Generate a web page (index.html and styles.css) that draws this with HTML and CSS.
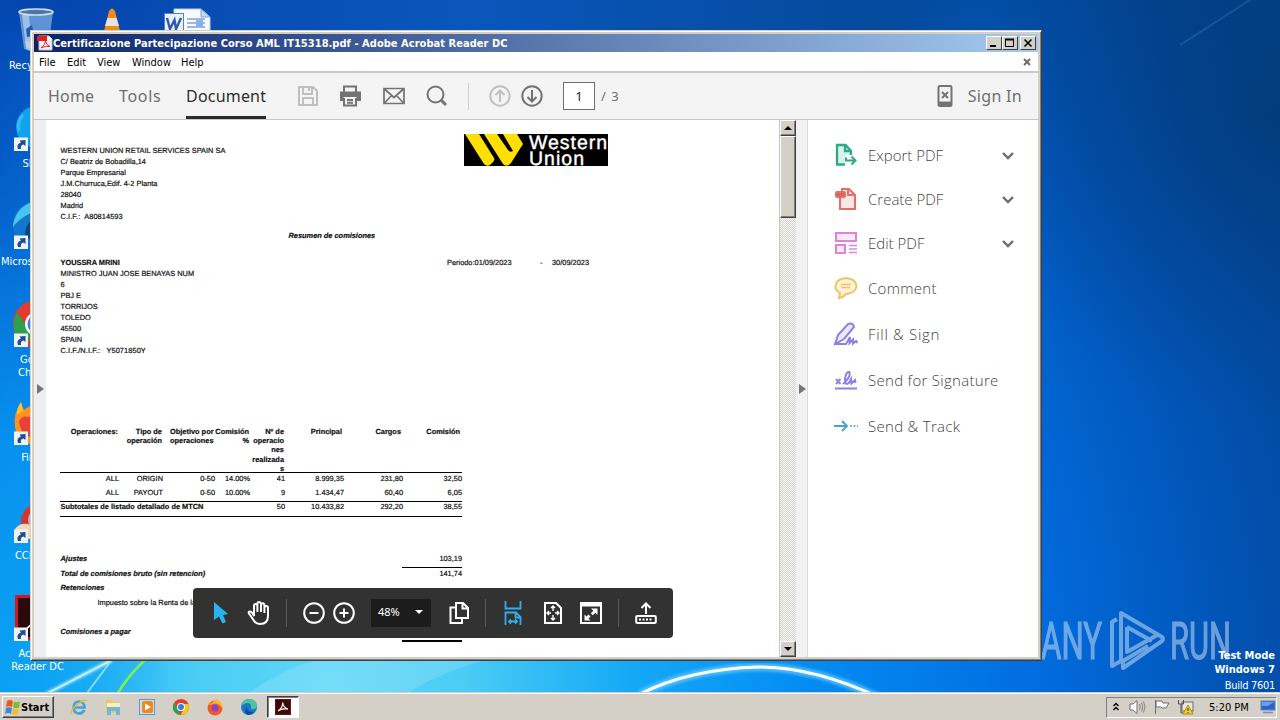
FILE: index.html
```html
<!DOCTYPE html>
<html lang="en">
<head>
    <meta charset="UTF-8">
    <meta name="viewport" content="width=device-width, initial-scale=1.0">
    <title>Certificazione Partecipazione Corso AML IT15318.pdf - Adobe Acrobat Reader DC</title>
    <link rel="stylesheet" href="styles.css">
</head>
<body>
<div class="desktop">

    <!-- Wallpaper -->
    <svg class="wallpaper" viewBox="0 0 1280 720">
        <defs>
            <radialGradient id="glow" gradientUnits="userSpaceOnUse" cx="330" cy="690" r="1130">
                <stop offset="0" stop-color="#5fd8f6"/>
                <stop offset=".12" stop-color="#4accf5"/>
                <stop offset=".27" stop-color="#14a8f5"/>
                <stop offset=".42" stop-color="#048cf4"/>
                <stop offset=".62" stop-color="#016de0"/>
                <stop offset=".8" stop-color="#0253b4"/>
                <stop offset="1" stop-color="#033f86"/>
            </radialGradient>
            <linearGradient id="leftShade" x1="0" y1="0" x2="0" y2="1">
                <stop offset="0" stop-color="#0546b0"/>
                <stop offset=".28" stop-color="#0462cc"/>
                <stop offset=".6" stop-color="#078fee"/>
                <stop offset="1" stop-color="#0ba4f4"/>
            </linearGradient>
            <linearGradient id="leftFade" x1="0" y1="0" x2="1" y2="0">
                <stop offset="0" stop-color="#fff"/>
                <stop offset=".25" stop-color="#fff" stop-opacity=".8"/>
                <stop offset="1" stop-color="#fff" stop-opacity="0"/>
            </linearGradient>
            <linearGradient id="topShade" x1="0" y1="0" x2="1" y2="0">
                <stop offset="0" stop-color="#0545ae"/>
                <stop offset=".45" stop-color="#0a56bb"/>
                <stop offset=".85" stop-color="#044a9d"/>
                <stop offset="1" stop-color="#044a9d" stop-opacity="0"/>
            </linearGradient>
            <radialGradient id="corner" gradientUnits="userSpaceOnUse" cx="1270" cy="120" r="300">
                <stop offset="0" stop-color="#033a78" stop-opacity=".7"/>
                <stop offset="1" stop-color="#033f86" stop-opacity="0"/>
            </radialGradient>
            <mask id="leftMask"><rect width="170" height="720" fill="url(#leftFade)"/></mask>
            <filter id="soft"><feGaussianBlur stdDeviation="1.6"/></filter>
        </defs>
        <rect width="1280" height="720" fill="url(#glow)"/>
        <rect width="1040" height="32" fill="url(#topShade)"/>
        <rect x="960" width="320" height="440" fill="url(#corner)"/>
        <rect width="170" height="720" fill="url(#leftShade)" mask="url(#leftMask)"/>
        <path d="M240 700Q300 650 420 640H560Q430 670 400 700Z" fill="#fff" opacity=".14"/>
        <path d="M46 694L112 660" stroke="#c8f4ff" stroke-width="3" filter="url(#soft)"/>
        <path d="M46 694L110 661" stroke="#d8f8ff" stroke-width="1.5" opacity=".8"/>
        <path d="M87 693L111 661" stroke="#9feaf8" stroke-width="2" opacity=".8"/>
        <path d="M118 693Q128 676 145 660" stroke="#7ef04e" stroke-width="2.5" fill="none"/>
        <path d="M640 694Q690 669 758 667Q815 667 880 698" stroke="#6cd0ff" stroke-width="8" fill="none" filter="url(#soft)" opacity=".7"/>
        <path d="M640 694Q690 669 758 667Q815 667 880 698" stroke="#fff" stroke-width="3" fill="none"/>
        <path d="M1180 45L1250 0" stroke="#4a86c0" stroke-width="2" opacity=".3"/>
    </svg>

    <!-- Desktop icons -->
    <div class="icons">
        <div class="icon">
            <svg width="48" height="48" viewBox="0 0 48 48">
                <path d="M6 7L11 44Q23 49 35 44L40 7Z" fill="#7fa9dc" opacity=".75"/>
                <path d="M9 10L13 42L19 44L16 10Z" fill="#d6e6f6" opacity=".55"/>
                <ellipse cx="23" cy="7" rx="17" ry="3" fill="#4c77ae" stroke="#d9dee2" stroke-width="1.6"/>
                <path d="M12 36Q23 40 35 35L34 44Q23 49 13 44Z" fill="#cdd5dc" opacity=".7"/>
                <path d="M13 24L19 20L21 31L14 32Z" fill="#1b5cc4"/>
            </svg>
            <span>Recycle Bin</span>
        </div>
        <div class="icon">
            <svg width="48" height="48" viewBox="0 0 48 48">
                <circle cx="24" cy="24" r="21" fill="#11a2ee"/>
                <path d="M10 12Q4 18 6 28" stroke="#37bbf6" stroke-width="3" fill="none"/>
                <use href="#shortcut"/>
            </svg>
            <span>Skype</span>
        </div>
        <div class="icon">
            <svg width="48" height="48" viewBox="0 0 48 48">
                <circle cx="24" cy="24" r="24" fill="#1177cc"/>
                <path d="M0 24Q4 2 26 0L40 8Q14 8 0 26Z" fill="#49c4ef"/>
                <path d="M12 34Q12 20 24 18V44Z" fill="#0a4584"/>
                <use href="#shortcut"/>
            </svg>
            <span>Microsoft Edge</span>
        </div>
        <div class="icon">
            <svg width="48" height="48" viewBox="0 0 48 48">
                <circle cx="24" cy="25" r="24" fill="#e33b2e"/>
                <path d="M4 13L18 34L14 48Q-6 34 4 13Z" fill="#2da14d"/>
                <circle cx="24" cy="25" r="12" fill="#fff"/>
                <circle cx="24" cy="25" r="9.500" fill="#3f79e6"/>
                <use href="#shortcut"/>
            </svg>
            <span>Google Chrome</span>
        </div>
        <div class="icon">
            <svg width="48" height="48" viewBox="0 0 48 48">
                <path d="M2 30Q0 16 8 6L11 13Q15 9 22 8V48Q4 46 2 30Z" fill="#ff9022"/>
                <path d="M6 24Q9 18 16 20L24 17V40Q8 42 6 24Z" fill="#e8433a"/>
                <path d="M4 18Q4 10 8 5L10 14Z" fill="#ffc529"/>
                <use href="#shortcut"/>
            </svg>
            <span>Firefox</span>
        </div>
        <div class="icon">
            <svg width="48" height="48" viewBox="0 0 48 48">
                <circle cx="27" cy="27" r="19" fill="#d3362b"/>
                <circle cx="26" cy="25" r="11" fill="#a3b7d8"/>
                <path d="M2 34Q8 26 18 30L22 44H6Z" fill="#f1d9b5"/>
                <use href="#shortcut"/>
            </svg>
            <span>CCleaner</span>
        </div>
        <div class="icon">
            <svg width="48" height="48" viewBox="0 0 48 48">
                <rect x="3.500" y="3.500" width="42" height="42" fill="#2a0a0a" stroke="#d8141c" stroke-width="3"/>
                <path d="M12 37Q22 30 26 16" stroke="#fff" stroke-width="1.500" fill="none"/>
                <use href="#shortcut"/>
            </svg>
            <span>Acrobat<br>Reader DC</span>
        </div>
        <div class="icon">
            <svg width="48" height="48" viewBox="0 0 48 48">
                <path d="M21 6Q24 1 27 6L35 38H13Z" fill="#f28a1a"/>
                <path d="M19.500 13H28.500L31 21H17Z" fill="#e6e4e2"/>
                <path d="M15 30H33L35 36H13Z" fill="#e6e4e2"/>
            </svg>
        </div>
        <div class="icon third">
            <svg width="48" height="48" viewBox="0 0 48 48">
                <path d="M11 4H38L47 12V48H11Z" fill="#f6fafe" stroke="#b9cfe8"/>
                <path d="M38 4V12H47Z" fill="#c2d8f0" stroke="#7ea4d2"/>
                <path d="M24 14H42M24 18H42M24 22H42" stroke="#7fa5d6" stroke-width="1.500"/>
                <rect x="33" y="15" width="7" height="7" fill="#86b0e6"/>
                <rect x="1.500" y="8.500" width="19" height="19" fill="#e9f0fa" stroke="#5d80bd"/>
                <path d="M4 13L7 24L11.500 15L13 24L18 13" stroke="#2f58aa" stroke-width="2.400" fill="none"/>
            </svg>
        </div>
    </div>

    <!-- Watermark -->
    <svg class="watermark" width="200" height="70" viewBox="0 0 200 70">
        <text x="1" y="55" textLength="61" lengthAdjust="spacingAndGlyphs">ANY</text>
        <text x="130" y="55" textLength="61" lengthAdjust="spacingAndGlyphs">RUN</text>
        <path d="M77 15L72 18V62L81 57V9L122 33Q124 35 122 37L83 64V57L108 42M87 23L112 37M87 23V48L119 30"/>
    </svg>
    <div class="build">
        <b>Test Mode</b>
        <b>Windows 7</b>
        <span>Build 7601</span>
    </div>

    <!-- Acrobat window -->
    <div class="window">
        <div class="titlebar">
            <svg width="16" height="16" viewBox="0 0 16 16">
                <path d="M2 1H12L15 4V15H2Z" fill="#f4f1f0" stroke="#c9c4c4"/>
                <rect x="0" y="1" width="10" height="5" fill="#e0221c"/>
                <path d="M4 13Q8 10 8.500 6Q9 10 13 11.500Q8 10.500 4 13" stroke="#d5322c" fill="none"/>
            </svg>
            <span class="title">Certificazione Partecipazione Corso AML IT15318.pdf - Adobe Acrobat Reader DC</span>
            <div class="winbtns">
                <i><svg width="12" height="10"><path d="M2 8H8" stroke="#000" stroke-width="2"/></svg></i>
                <i><svg width="12" height="10"><path d="M1.500 1.500H9.500V8.500H1.500Z" stroke="#000" fill="none"/><path d="M1 1.500H10" stroke="#000" stroke-width="2"/></svg></i>
                <i class="close"><svg width="12" height="10"><path d="M2.500 1.500L9.500 8.500M9.500 1.500L2.500 8.500" stroke="#000" stroke-width="1.600"/></svg></i>
            </div>
        </div>
        <div class="menubar">
            <span class="m-file">File</span>
            <span class="m-edit">Edit</span>
            <span class="m-view">View</span>
            <span class="m-window">Window</span>
            <span class="m-help">Help</span>
            <svg width="8" height="8"><path d="M1 1L7 7M7 1L1 7" stroke="#6b6b6b" stroke-width="2"/></svg>
        </div>

        <div class="toolbar">
            <div class="tabs">
                <span class="tab home">Home</span>
                <span class="tab tools">Tools</span>
                <span class="tab active">Document</span>
            </div>
            <div class="tb-icons">
                <svg class="dim" width="22" height="22" viewBox="0 0 22 22"><path d="M2 2H16L20 6V20H2ZM6 2V9H15V2M12 3V6M6 20V13H16V20"/></svg>
                <svg width="22" height="22" viewBox="0 0 22 22"><path d="M4 7V1.500H16V7M4 13V20.500H16V13M7 15H13M7 17.700H13"/><path d="M0 6.500H21V16H16.500V12H3.500V16H0Z" fill="#737373" stroke="none"/></svg>
                <svg width="22" height="22" viewBox="0 0 22 22"><path d="M1 3.500H21V18.500H1ZM1 3.500L11 12.500L21 3.500M1 18.500L8.500 10.500M21 18.500L13.500 10.500" stroke-width="1.700"/></svg>
                <svg width="22" height="22" viewBox="0 0 22 22"><circle cx="9.500" cy="9.500" r="8"/><path d="M15 15L20 20" stroke-width="3"/></svg>
            </div>
            <div class="pager">
                <svg class="dim" width="22" height="22" viewBox="0 0 22 22"><circle cx="11" cy="11" r="9.700"/><path d="M11 17V6M6.500 10L11 5.500L15.500 10"/></svg>
                <svg width="22" height="22" viewBox="0 0 22 22"><circle cx="11" cy="11" r="9.700"/><path d="M11 5V16M6.500 12L11 16.500L15.500 12"/></svg>
                <span class="page-no">1</span>
                <span class="page-count">/ 3</span>
            </div>
            <div class="signin">
                <svg width="16" height="22" viewBox="0 0 16 22"><rect x="1.500" y="1" width="13" height="20" rx="1.500"/><path d="M1 18.500H15" stroke-width="4"/><path d="M5 7L11 13M11 7L5 13"/></svg>
                <span>Sign In</span>
            </div>
        </div>

        <div class="content">
            <div class="side left"><svg width="7" height="10"><path d="M0 0L7 5L0 10Z" fill="#757575"/></svg></div>

            <div class="page">
                <svg class="logo" width="144" height="32" viewBox="0 0 144 32">
                    <rect width="144" height="32" fill="#000"/>
                    <path d="M1 0H15L30 24Q31 26 29 28L26 31Q23 33 20 30Z" fill="#ffe000"/>
                    <path d="M20 0H33L44 16Q46 19 49 17L39 0H53L59 10L47 29Q43 34 39 30Z" fill="#ffe000"/>
                    <text x="65" y="14.500" textLength="78">Western</text>
                    <text x="65" y="30.500" textLength="55">Union</text>
                </svg>

                <div class="company">
                    <p>WESTERN UNION RETAIL SERVICES SPAIN SA</p>
                    <p>C/ Beatriz de Bobadilla,14</p>
                    <p>Parque Empresarial</p>
                    <p>J.M.Churruca,Edif. 4-2 Planta</p>
                    <p>28040</p>
                    <p>Madrid</p>
                    <p class="cif">C.I.F.:&nbsp; A80814593</p>
                </div>

                <p class="summary">Resumen de comisiones</p>

                <div class="customer">
                    <div>
                        <p><b>YOUSSRA MRINI</b></p>
                        <p>MINISTRO JUAN JOSE BENAYAS NUM</p>
                        <p>6</p>
                        <p>PBJ E</p>
                        <p>TORRIJOS</p>
                        <p>TOLEDO</p>
                        <p>45500</p>
                        <p>SPAIN</p>
                        <p class="cif">C.I.F./N.I.F.: &nbsp; Y5071850Y</p>
                    </div>
                    <div class="period"><span>Periodo:01/09/2023</span><span>-</span><span>30/09/2023</span></div>
                </div>

                <div class="row head">
                    <span>Operaciones:</span>
                    <span>Tipo de<br>operación</span>
                    <span class="goal">Objetivo por<br>operaciones</span>
                    <span>Comisión<br>%</span>
                    <span>Nº de<br>operacio<br>nes<br>realizada<br>s</span>
                    <span>Principal</span>
                    <span>Cargos</span>
                    <span>Comisión</span>
                </div>
                <div class="row first"><span>ALL</span><span>ORIGIN</span><span>0-50</span><span>14.00%</span><span>41</span><span>8.999,35</span><span>231,80</span><span>32,50</span></div>
                <div class="row"><span>ALL</span><span>PAYOUT</span><span>0-50</span><span>10.00%</span><span>9</span><span>1.434,47</span><span>60,40</span><span>6,05</span></div>
                <div class="row subtotal"><b>Subtotales de listado detallado de MTCN</b><span>50</span><span>10.433,82</span><span>292,20</span><span>38,55</span></div>

                <div class="totals">
                    <div class="total"><em>Ajustes</em><span>103,19</span></div>
                    <div class="total sum"><em>Total de comisiones bruto (sin retencion)</em><span>141,74</span></div>
                    <div class="total"><em>Retenciones</em></div>
                    <p class="tax">Impuesto sobre la Renta de las</p>
                    <div class="total pay"><em>Comisiones a pagar</em></div>
                    <div class="rule"></div>
                </div>
            </div>

            <div class="scrollbar">
                <i class="sb-btn"><svg width="8" height="4"><path d="M0 4L4 0L8 4Z"/></svg></i>
                <i class="thumb"></i>
                <i class="sb-btn down"><svg width="8" height="4"><path d="M0 0L4 4L8 0Z"/></svg></i>
            </div>
            <div class="side right"><svg width="7" height="10"><path d="M0 0L7 5L0 10Z" fill="#757575"/></svg></div>

            <div class="panel">
                <div class="tool">
                    <svg width="24" height="24" viewBox="0 0 24 24" stroke="#2fa888"><path d="M13 21H3V2H11L17 8V12H11V19Z" fill="#d5f3ec" stroke="none"/><path d="M11 21.500H3V2H11.500L17 8V12M11 2V8H17" stroke-width="2.300"/><path d="M12 14.500V17.500H21M17.500 13.500L21.500 17.500L17.500 21.500"/></svg>
                    <span>Export PDF</span>
                    <svg class="chev" width="14" height="10"><path d="M2 2L7 7L12 2"/></svg>
                </div>
                <div class="tool">
                    <svg width="24" height="24" viewBox="0 0 24 24" stroke="#e0706b"><path d="M6 11V22H21V8L15 2H8V5M14 2V8H21" fill="#fde6e4"/><rect x="2" y="5" width="9" height="5" rx="1" fill="#e0605e"/></svg>
                    <span>Create PDF</span>
                    <svg class="chev" width="14" height="10"><path d="M2 2L7 7L12 2"/></svg>
                </div>
                <div class="tool">
                    <svg width="24" height="24" viewBox="0 0 24 24" stroke="#dc85d8"><path d="M2 2H22V10H2ZM2 14H11V22H2Z" fill="#fbe8fa"/><path d="M15 14.500H23M15 18H23M15 21.500H23" stroke-width="1.300"/></svg>
                    <span>Edit PDF</span>
                    <svg class="chev" width="14" height="10"><path d="M2 2L7 7L12 2"/></svg>
                </div>
                <div class="tool tall">
                    <svg width="24" height="24" viewBox="0 0 24 24" stroke="#ebc46a"><path d="M5 22L6 17Q1 14 1.500 10Q2 3 12 2Q22 3 22.500 10Q22 17 12 18Q9 21.500 5 22Z" fill="#fff3d2"/><path d="M7 8.500H17M7 11.500H16" stroke-width="1.300"/></svg>
                    <span>Comment</span>
                </div>
                <div class="tool tall sign">
                    <svg width="24" height="24" viewBox="0 0 24 24" stroke="#8b80e6"><path d="M1 22L4 13L14 2Q19 0 20 5L10 17L1 22Z" fill="#ebe9fd"/><path d="M1 22H12L16 15L15.500 21L19 17.500L19 21.500L22 19L23.500 21"/></svg>
                    <span>Fill &amp; Sign</span>
                </div>
                <div class="tool tall">
                    <svg width="24" height="24" viewBox="0 0 24 24" stroke="#8b80e6"><path d="M1 20.500H23M2 11L6.500 16M6.500 11L2 16M9 16Q17 9 15.500 4Q12 3 11 11Q11 18 15 15L17 11L17.500 15.500L21 12L21.500 15"/></svg>
                    <span>Send for Signature</span>
                </div>
                <div class="tool tall">
                    <svg width="24" height="24" viewBox="0 0 24 24" stroke="#4ba3c7"><path d="M0 12H13M8 7L13 12L8 17"/><path d="M16 12H24" stroke-dasharray="2 1.500" stroke-width="1.400"/></svg>
                    <span>Send &amp; Track</span>
                </div>
            </div>
        </div>

        <!-- Floating page controls -->
        <div class="hud">
            <svg class="h-arrow" width="16" height="22" viewBox="0 0 16 22"><path d="M1 0L15 12L10 13L13 20L9.500 21.500L6 14.500L1 18Z" fill="#26b4f5" stroke="none"/></svg>
            <svg class="h-hand" width="24" height="24" viewBox="0 0 24 24"><path d="M7 15V5Q7 3 8.700 3T10.400 5V11V3Q10.400 1 12 1T14 3V11V4Q14 2.200 15.600 2.200T17.400 4V12V7Q17.400 5 19.200 5T21 7V15Q21 23 13 23Q8.500 23 6.500 19L2 12.500Q1 10.500 3 10.500Q5 10.500 7 15Z"/></svg>
            <i class="sep s1"></i>
            <svg class="h-minus" width="22" height="22" viewBox="0 0 22 22"><circle cx="11" cy="11" r="9.800"/><path d="M6.500 11H15.500"/></svg>
            <svg class="h-plus" width="22" height="22" viewBox="0 0 22 22"><circle cx="11" cy="11" r="9.800"/><path d="M6.500 11H15.500M11 6.500V15.500"/></svg>
            <div class="zoom"><span>48%</span><svg width="8" height="4"><path d="M0 0H8L4 4Z" fill="#fff" stroke="none"/></svg></div>
            <svg class="h-copy" width="20" height="24" viewBox="0 0 20 24"><path d="M7 2H14L19 7V17H7ZM13.500 2V7.500H19M7 6.500H1.500V22H13V17"/></svg>
            <i class="sep s2"></i>
            <svg class="h-width" width="18" height="26" viewBox="0 0 18 26" stroke="#35aee8"><path d="M1.500 1V8.500H16.500V1M1.500 25V12.500H12L16.500 17V25M11.500 12.500V17.500H16.500M5 21.500H13M7 19.500L5 21.500L7 23.500M11 19.500L13 21.500L11 23.500" stroke-width="1.800"/></svg>
            <svg class="h-fit" width="18" height="22" viewBox="0 0 18 22"><path d="M1 1H12L17 6V21H1Z"/><path d="M9 4V9M9 13V18M3.500 11H7M11 11H14.500M7 6L9 4L11 6M7 16L9 18L11 16M5 9L3 11L5 13M13 9L15 11L13 13" stroke-width="1.400"/></svg>
            <svg class="h-full" width="22" height="22" viewBox="0 0 22 22"><path d="M1 1H21V21H1Z"/><path d="M1 2.500H21" stroke-width="4"/><path d="M11 6.500H17.500V13L15.300 10.800L12.800 13.300L10.800 11.300L13.300 8.700ZM4.500 12.500L6.500 14.500L8.500 12.500L10.500 14.500L8.500 16.500L10.500 18.500H4.500Z" fill="#fff" stroke="none"/></svg>
            <i class="sep s3"></i>
            <svg class="h-share" width="22" height="22" viewBox="0 0 22 22"><path d="M11 12V2M6.500 6L11 1.500L15.500 6"/><rect x="1.200" y="14" width="19.600" height="7" rx="1"/><path d="M4 17.500H18" stroke-width="2" stroke-dasharray="2 1.500"/></svg>
        </div>
    </div>

    <!-- Taskbar -->
    <div class="taskbar">
        <div class="start">
            <svg width="17" height="17" viewBox="0 0 17 17"><path d="M3 2Q6 0 9 2L8 8Q5 6.500 2 8Z" fill="#e8592a"/><path d="M10 2.500Q13 4 16 2.500L15 8.500Q12 10 9 8.500Z" fill="#7cb93c"/><path d="M2 9Q5 7.500 8 9L7 15Q4 13 1 15Z" fill="#3d87d8"/><path d="M9 9.500Q12 11 15 9.500L14 15Q11 17 8 15Z" fill="#f3bd2c"/></svg>
            <b>Start</b>
        </div>
        <div class="quick">
            <svg width="18" height="18" viewBox="0 0 18 18"><path d="M14.500 12Q12.500 15.500 9 15.500Q3.500 15 3.500 9.500Q4 3.500 9 3.500Q14.500 4 14.500 9.500H5" stroke="#43a4dc" stroke-width="2.600" fill="none"/><path d="M2 16Q-1 13 8 6Q16 0 17 3" stroke="#e7bd36" stroke-width="1.400" fill="none"/></svg>
            <svg width="18" height="18" viewBox="0 0 18 18"><path d="M2 2H8L9 4H16V15H2Z" fill="#e9c95f"/><path d="M3 5H16V9H3Z" fill="#fbf0bd"/><path d="M3 9H16V17H12V13H7V17H3Z" fill="#71b6dd"/></svg>
            <svg width="18" height="18" viewBox="0 0 18 18"><rect x="1.500" y="1.500" width="15" height="15" fill="#c9dff2" stroke="#5e97cb"/><rect x="4" y="3" width="11" height="12" rx="2" fill="#f08a16"/><path d="M7 5.500L13 9L7 12.500Z" fill="#fff"/></svg>
            <svg width="18" height="18" viewBox="0 0 18 18"><circle cx="9" cy="9" r="8" fill="#e2402f"/><path d="M2 5L8 12L7 17Q-2 13 2 5Z" fill="#31a350"/><path d="M16.500 6H9L12 11L8.500 17Q19 16 16.500 6Z" fill="#fbc61a"/><circle cx="9" cy="9" r="4" fill="#fff"/><circle cx="9" cy="9" r="3" fill="#3f78e3"/></svg>
            <svg width="18" height="18" viewBox="0 0 18 18"><circle cx="9" cy="10" r="7.500" fill="#f4572c"/><path d="M2 4L5 6Q10 1 11 1Q17 5 16.500 11Q12 4 7 6Q2 8 2 4Z" fill="#ffb822"/><circle cx="9" cy="10" r="3.500" fill="#7f46cf"/></svg>
            <svg width="18" height="18" viewBox="0 0 18 18"><circle cx="9" cy="9" r="8" fill="#1976c9"/><path d="M1 9Q2 1 10 1Q17 2 17 8Q16 12 11 11Q12 6 8 5Q3 5 1 9Z" fill="#49c7a0"/><path d="M7 9Q6 14 14 14Q11 17.500 7 16.500Q3 13 7 9Z" fill="#0d4e9c"/></svg>
        </div>
        <div class="task">
            <svg width="16" height="16" viewBox="0 0 16 16"><rect width="16" height="16" fill="#3d0808"/><rect x=".5" y=".5" width="15" height="15" fill="none" stroke="#6e1313"/><path d="M3 12Q8 8.500 7.700 3.500Q8 8.500 13 10Q7 9 3 12" stroke="#f4e9e9" stroke-width="1.300" fill="none"/></svg>
        </div>
        <div class="tray">
            <svg class="t-up" width="8" height="10"><path d="M1.500 4L4 1.500L6.500 4M1.500 8L4 5.500L6.500 8" stroke="#000" stroke-width="1.400" fill="none"/></svg>
            <svg class="t-vol" width="17" height="16" viewBox="0 0 17 16"><path d="M1 5H4L8 1.500V14.500L4 11H1Z" fill="#fff" stroke="#6f6f6f"/><path d="M10.500 5Q12 8 10.500 11M12.500 3.500Q15 8 12.500 12.500M14.500 2.500Q17.500 8 14.500 13.500" stroke="#858585" fill="none"/></svg>
            <svg class="t-flag" width="16" height="16" viewBox="0 0 16 16"><path d="M1.500 1V15M2 2H8L9 4H15L12 9H8L7 8H2Z" fill="#fff" stroke="#6d6d6d"/></svg>
            <svg class="t-net" width="17" height="16" viewBox="0 0 17 16"><rect x="5" y="3" width="11" height="9" fill="#e7e7e0" stroke="#6a6a6a"/><path d="M1.500 1V5H6.500V1M4 5V14H6" stroke="#4f4f4f" fill="none"/><path d="M11 6L16 15H6Z" fill="#fbd31c" stroke="#a98d10"/><path d="M11 9V12M11 13V14" stroke="#222"/></svg>
            <span>5:20 PM</span>
            <svg class="t-desk" width="17" height="14" viewBox="0 0 17 14"><rect x="1" y="1" width="14" height="9" fill="#2b63c8" stroke="#5f86c4"/><path d="M2 2H14L8 6H2Z" fill="#6d9fe8"/><path d="M3 12.500H13" stroke="#7791b8" stroke-width="1.500"/></svg>
        </div>
    </div>

    <!-- Shared shortcut arrow -->
    <svg class="defs" width="0" height="0">
        <g id="shortcut">
            <rect x="1" y="34.500" width="14" height="14" fill="#eef3f8"/>
            <path d="M5 46Q3 41 8 39.500L6.500 37.500L12.500 37V43L10.500 41.500Q7 42 8 46Z" fill="#1e4c94"/>
        </g>
    </svg>
</div>
</body>
</html>
```
FILE: styles.css
```css
* {
    box-sizing: border-box;
    margin: 0;
    padding: 0;
}

body {
    font-family: "DejaVu Sans Condensed", "DejaVu Sans", sans-serif;
    font-size: 11px;
    overflow: hidden;
}

svg {
    flex: none;
    display: block;
}

.desktop {
    position: relative;
    width: 1280px;
    height: 720px;
    overflow: hidden;
    background: #0467cf;
}

.wallpaper {
    position: absolute;
    inset: 0;
}

.defs {
    position: absolute;
}

/* Desktop icons */
.icons {
    position: absolute;
    left: 0;
    top: 5px;
    display: grid;
    grid-auto-flow: column;
    grid-template-rows: repeat(7, 98px);
    grid-auto-columns: 75px;
}

.icon {
    display: flex;
    flex-direction: column;
    align-items: center;
    color: #fff;
    font-size: 11px;
    line-height: 13px;
    text-align: center;
}

.icon.third {
    grid-column: 3;
    grid-row: 1;
}

.icon svg {
    margin: 0 2px 6px 0;
}

/* Watermark */
.watermark {
    position: absolute;
    left: 1040px;
    top: 604px;
    opacity: .55;
}

.watermark text {
    font-family: Roboto, sans-serif;
    font-size: 51px;
    fill: #c5dcf5;
    stroke: #c5dcf5;
    stroke-width: 1.2px;
}

.watermark path {
    fill: none;
    stroke: #c5dcf5;
    stroke-width: 4;
    stroke-linejoin: round;
}

.build {
    position: absolute;
    right: 5px;
    top: 649px;
    display: flex;
    flex-direction: column;
    align-items: flex-end;
    color: #fff;
    line-height: 14px;
}

.build span {
    margin-top: 2px;
    letter-spacing: -.3px;
}

/* Window frame */
.window {
    position: absolute;
    left: 30px;
    top: 30px;
    width: 1012px;
    height: 631px;
    padding: 3px;
    background: #d4d0c8;
    border: 1px solid;
    border-color: #d4d0c8 #404040 #404040 #d4d0c8;
    box-shadow: inset 1px 1px #fff, inset -1px -1px #808080;
    display: flex;
    flex-direction: column;
}

.titlebar {
    height: 18px;
    display: flex;
    align-items: center;
    padding: 0 2px 0 3px;
    background: linear-gradient(90deg, #0a246a, #a6caf0);
    color: #fff;
    font-weight: bold;
}

.title {
    white-space: nowrap;
    letter-spacing: .04px;
}

.winbtns {
    display: flex;
    margin-left: auto;
}

.winbtns i {
    width: 16px;
    height: 14px;
    padding: 1px;
    background: #d4d0c8;
    border: 1px solid;
    border-color: #fff #404040 #404040 #fff;
}

.winbtns .close {
    margin-left: 2px;
}

.menubar {
    height: 21px;
    display: flex;
    align-items: center;
    padding: 1px 7px 0 5px;
    background: #fff;
    border-bottom: 2px solid #c9c9c9;
}

.menubar .m-file { width: 28px; }
.menubar .m-edit { width: 30px; }
.menubar .m-view { width: 35px; }
.menubar .m-window { width: 49px; }

.menubar svg {
    margin-left: auto;
}

/* Toolbar */
.toolbar {
    height: 47px;
    display: flex;
    align-items: center;
    padding: 0 16px 0 14px;
    background: #f4f4f4;
    border-bottom: 1px solid #c6c6c6;
    font-family: "Noto Sans", sans-serif;
    font-size: 16px;
    color: #6e6e6e;
}

.toolbar svg {
    fill: none;
    stroke: #737373;
    stroke-width: 2;
}

.toolbar .dim {
    stroke: #c0c0c0;
}

.tabs {
    display: flex;
    height: 46px;
    line-height: 47px;
    letter-spacing: .2px;
}

.home { width: 71px; }

.tools {
    width: 67px;
    letter-spacing: .7px;
}

.tab.active {
    width: 80px;
    color: #2c2c2c;
    border-bottom: 3px solid #2c2c2c;
}

.tb-icons {
    display: flex;
    gap: 21px;
    margin-left: 31px;
    padding-right: 20px;
    height: 27px;
    align-items: center;
    border-right: 1px solid #cfcfcf;
}

.pager {
    display: flex;
    align-items: center;
    gap: 10px;
    margin-left: 20px;
}

.page-no {
    width: 32px;
    height: 28px;
    margin-left: 10px;
    border: 1px solid #6e6e6e;
    background: #fff;
    color: #222;
    font-size: 13px;
    line-height: 26px;
    text-align: center;
}

.page-count {
    margin-left: -4px;
    font-size: 13px;
    word-spacing: 2px;
}

.signin {
    display: flex;
    align-items: center;
    gap: 15px;
    margin-left: auto;
    letter-spacing: .3px;
}

/* Content */
.content {
    flex: 1;
    display: flex;
    min-height: 0;
    background: #fff;
}

.side {
    display: flex;
    align-items: center;
    background: #efefef;
}

.side.left {
    width: 12px;
    padding-left: 3px;
}

.side.right {
    width: 12px;
    padding-left: 3px;
    background: #f2f1f1;
    border-right: 1px solid #dcdcdc;
}

.page {
    position: relative;
    width: 733px;
    padding: 25px 0 0 14.5px;
    background: #fff;
    color: #111;
    font-family: "Liberation Sans", Arial, sans-serif;
    font-size: 7.4px;
    line-height: 11px;
    text-rendering: geometricPrecision;
    white-space: nowrap;
    overflow: hidden;
    -webkit-text-stroke: .2px #111;
}

.cif {
    letter-spacing: .08px;
}

.logo {
    position: absolute;
    left: 418px;
    top: 14px;
}

.logo text {
    font-size: 19.5px;
    font-weight: 500;
    fill: #fff;
    stroke: #fff;
    stroke-width: .4px;
}

.summary {
    margin: 8px 0 16px 228px;
    font-weight: bold;
    font-style: italic;
}

.customer {
    display: flex;
    height: 170px;
}

.customer > div:first-child {
    width: 386.5px;
}

.period {
    display: flex;
}

.period span:first-child { width: 93px; }
.period span:nth-child(2) { width: 12px; }

/* Operations table */
.row {
    width: 402px;
    margin-left: -.5px;
    display: grid;
    grid-template-columns: 59px 44px 52px 35px 35px 59px 59px 59px;
    text-align: right;
}

.row.head {
    height: 46px;
    font-weight: bold;
    line-height: 9.2px;
    border-bottom: 1px solid #000;
}

.row.head span {
    padding-right: 1px;
}

.row.head .goal {
    padding-left: 7px;
    text-align: left;
}

.row.head span:nth-child(n+6) {
    padding-right: 2px;
}

.row.first {
    height: 13px;
    line-height: 11px;
}

.row.first + .row {
    height: 15px;
    line-height: 14px;
}

.row.subtotal {
    height: 16px;
    line-height: 10px;
    border-top: 1px solid #000;
    border-bottom: 1px solid #000;
}

.row.subtotal b {
    grid-column: span 4;
    padding-left: .5px;
    text-align: left;
}

.totals {
    width: 401.5px;
    padding-top: 36px;
}

.total {
    display: flex;
    justify-content: space-between;
    height: 14.5px;
}

.total em {
    font-weight: bold;
}

.sum span {
    width: 60px;
    margin-top: -1px;
    border-top: 1px solid #000;
    text-align: right;
}

.tax {
    margin-left: 37px;
    height: 29px;
}

.total.pay {
    height: 14px;
}

.rule {
    width: 60px;
    height: 2px;
    margin-left: auto;
    background: #000;
}

/* Scrollbar */
.scrollbar {
    width: 17px;
    display: flex;
    flex-direction: column;
    border-left: 1px solid #c4c4c4;
    background: repeating-conic-gradient(#d4d0c8 0 25%, #fff 0 50%) 0 0 / 2px 2px;
}

.scrollbar i {
    background: #d4d0c8;
    border: 1px solid;
    border-color: #fff #404040 #404040 #fff;
    box-shadow: inset -1px -1px #808080;
}

.sb-btn {
    height: 16px;
    display: flex;
    align-items: center;
    justify-content: center;
}

.thumb {
    height: 82px;
}

.sb-btn.down {
    margin-top: auto;
}

/* Tools panel */
.panel {
    flex: 1;
    padding-top: 13px;
    font-family: "Open Sans", sans-serif;
    font-weight: 300;
    font-size: 15px;
    color: #444;
}

.tool {
    height: 44px;
    display: flex;
    align-items: center;
    padding: 0 23px 0 26px;
}

.tool.tall {
    height: 46px;
    letter-spacing: .3px;
}

.tool.sign {
    letter-spacing: .7px;
}

.tool svg {
    fill: none;
    stroke-width: 2;
    margin-right: 10px;
}

.tool .chev {
    margin: 2px 0 0 auto;
    stroke: #6c6c6c;
    stroke-width: 2.4;
}

/* Floating controls */
.hud {
    position: absolute;
    left: 162px;
    top: 557px;
    width: 480px;
    height: 50px;
    padding-bottom: 1px;
    display: flex;
    align-items: center;
    background: #323232;
    border-radius: 4px;
}

.hud svg {
    fill: none;
    stroke-width: 2;
}

.hud svg:not(.h-width) {
    stroke: #fff;
}

.h-arrow { margin-left: 20px; }
.h-hand { margin-left: 18px; }
.h-minus { margin-left: 16px; }
.h-plus { margin-left: 8px; }
.h-copy { margin-left: 18px; }
.h-width { margin-left: 18px; }
.h-fit { margin-left: 22px; }
.h-full { margin-left: 18px; }
.h-share { margin-left: 16px; }

.sep {
    width: 1px;
    height: 28px;
    background: #595959;
}

.s1 { margin-left: 15px; }
.s2 { margin-left: 16px; }
.s3 { margin-left: 16px; }

.zoom {
    width: 60px;
    height: 28px;
    margin-left: 16px;
    padding: 0 8px 2px 7px;
    display: flex;
    align-items: center;
    justify-content: space-between;
    background: #1c1c1c;
    color: #fff;
    font-family: "Noto Sans", sans-serif;
    font-size: 11px;
}

/* Taskbar */
.taskbar {
    position: absolute;
    left: 0;
    bottom: 0;
    width: 1280px;
    height: 28px;
    display: flex;
    align-items: center;
    padding: 2px 3px 0 2px;
    background: #d4d0c8;
    box-shadow: inset 0 1px #d4d0c8, inset 0 2px #fff;
}

.start {
    width: 52px;
    height: 22px;
    display: flex;
    align-items: center;
    padding-left: 1px;
    border: 1px solid;
    border-color: #fff #404040 #404040 #fff;
    box-shadow: inset -1px -1px #808080;
    font-size: 11px;
}

.quick {
    display: flex;
    gap: 16px;
    margin-left: 16px;
}

.task {
    width: 32px;
    height: 22px;
    margin-left: 9px;
    display: flex;
    align-items: center;
    justify-content: center;
    background: #fff;
    border: 1px solid;
    border-color: #404040 #fff #fff #404040;
    box-shadow: inset 1px 1px #808080;
}

.tray {
    width: 171px;
    height: 21px;
    margin-left: auto;
    display: flex;
    align-items: center;
    padding-left: 5px;
    border: 1px solid;
    border-color: #808080 #fff #fff #808080;
}

.t-vol { margin-left: 9px; }
.t-flag { margin-left: 8px; }
.t-net { margin-left: 7px; }

.tray span {
    width: 41px;
    margin-left: 15px;
    white-space: nowrap;
}

.t-desk { margin-left: 11px; }
```
